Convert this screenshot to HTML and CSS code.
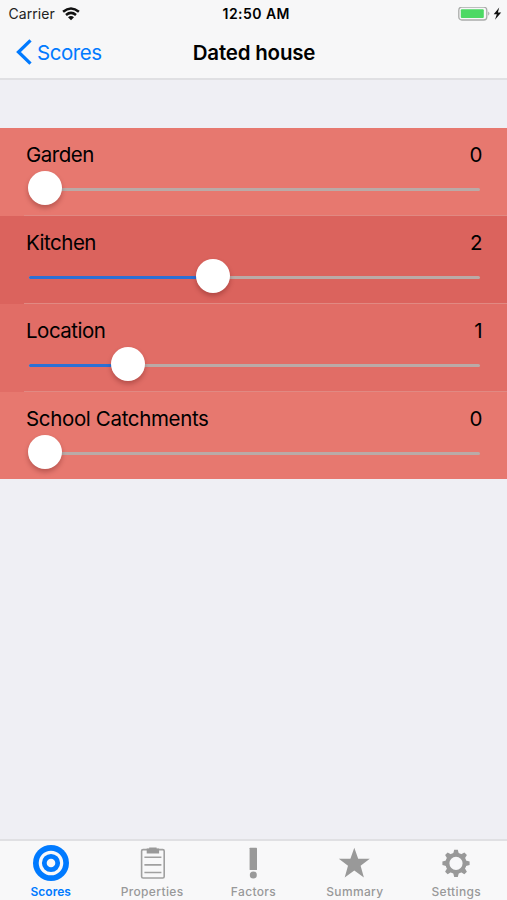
FILE: index.html
```html
<!DOCTYPE html>
<html lang="en">
<head>
<meta charset="utf-8">
<title>Dated house</title>
<link rel="stylesheet" href="styles.css">
</head>
<body>
<div class="app">
  <header class="header">
    <div class="status">
      <div class="status-left">
        <span class="carrier">Carrier</span>
        <svg class="wifi" width="18" height="14" viewBox="0 0 18 14"><g fill="none" stroke="#111" stroke-width="2.5"><path d="M1.1 4.8Q9-1.8 16.9 4.8"/><path d="M4 8Q9 3.8 14 8"/></g><path d="M6 10.2Q9 7.9 12 10.2L9 13.3Z" fill="#111"/></svg>
      </div>
      <span class="time">12:50 AM</span>
      <div class="status-right">
        <svg width="44" height="14" viewBox="0 0 44 14"><rect x=".8" y=".2" width="28" height="12.8" rx="3" fill="none" stroke="#aaacaa" stroke-width="1.3"/><rect x="2.8" y="2.2" width="23" height="8.8" rx="1" fill="#4cd964"/><path d="M30.3 4.6Q32.5 6.6 30.3 8.8Z" fill="#999"/><path d="M41.2.6 35.7 7.2H38.8L37 12.8 43.2 5.6H39.9Z" fill="#111"/></svg>
      </div>
    </div>
    <nav class="nav">
      <a class="back"><svg width="16" height="26" viewBox="0 0 16 26"><path d="M14.5 1.4 2.5 13 14.5 24.6" fill="none" stroke="#007aff" stroke-width="3.3"/></svg><span>Scores</span></a>
      <h1 class="title">Dated house</h1>
    </nav>
  </header>
  <main class="list">
    <section class="row low">
      <div class="line"><span>Garden</span><span>0</span></div>
      <div class="slider" style="--pos: 0px"><i class="fill"></i><i class="thumb"></i></div>
    </section>
    <section class="row high">
      <div class="line"><span>Kitchen</span><span>2</span></div>
      <div class="slider" style="--pos: 167.5px"><i class="fill"></i><i class="thumb"></i></div>
    </section>
    <section class="row mid">
      <div class="line"><span>Location</span><span>1</span></div>
      <div class="slider" style="--pos: 83.2px"><i class="fill"></i><i class="thumb"></i></div>
    </section>
    <section class="row low">
      <div class="line"><span class="long">School Catchments</span><span>0</span></div>
      <div class="slider" style="--pos: 0px"><i class="fill"></i><i class="thumb"></i></div>
    </section>
  </main>
  <footer class="tabs">
    <a class="tab active"><svg width="36" height="36" viewBox="0 0 36 36"><circle cx="18" cy="18" r="18" fill="#007aff"/><circle cx="18" cy="18" r="10.7" fill="none" stroke="#f8f8f9" stroke-width="3.2"/><circle cx="18" cy="18" r="4.3" fill="#f8f8f9"/></svg><span>Scores</span></a>
    <a class="tab"><svg width="36" height="36" viewBox="0 0 36 36"><rect x="7.6" y="4.6" width="22.6" height="28.4" rx="1.5" fill="none" stroke="#a0a0a0" stroke-width="1.6"/><path d="M12.7 3.6h2.5V2.6h7.4v1h2.5v4.8H12.7Z" fill="#999"/><path d="M10.4 12.2h17M10.4 19.9h17M10.4 27.5h17" stroke="#a0a0a0" stroke-width="1.6"/></svg><span>Properties</span></a>
    <a class="tab"><svg width="36" height="36" viewBox="0 0 36 36"><rect x="14.6" y="2.7" width="7.4" height="22.3" rx=".6" fill="#999"/><circle cx="18.3" cy="30" r="3.5" fill="#999"/></svg><span>Factors</span></a>
    <a class="tab"><svg width="36" height="36" viewBox="0 0 36 36"><path d="M17.3 2.8 21.2 13.8H32.8L23.6 20.7 26.9 32.5 17.3 25.6 7.7 32.5 11 20.7 1.8 13.8H13.4Z" fill="#999"/></svg><span>Summary</span></a>
    <a class="tab"><svg width="36" height="36" viewBox="0 0 36 36"><circle cx="18" cy="18.3" r="8.6" fill="none" stroke="#999" stroke-width="4"/><g fill="#999" transform="translate(0 .3)"><path id="tooth" d="M15 9 16.2 4.4h3.6L21 9Z"/><use href="#tooth" transform="rotate(45 18 18)"/><use href="#tooth" transform="rotate(90 18 18)"/><use href="#tooth" transform="rotate(135 18 18)"/><use href="#tooth" transform="rotate(180 18 18)"/><use href="#tooth" transform="rotate(225 18 18)"/><use href="#tooth" transform="rotate(270 18 18)"/><use href="#tooth" transform="rotate(315 18 18)"/></g></svg><span>Settings</span></a>
  </footer>
</div>
</body>
</html>
```
FILE: styles.css
```css
* { box-sizing: border-box; }
body { margin: 0; font-family: Inter, "Liberation Sans", sans-serif; color: #000; background: #efeff4; }
svg { display: block; flex: none; }
.app { width: 507px; height: 900px; display: flex; flex-direction: column; }
.header { height: 80px; background: #f7f7f8; border-bottom: 2px solid #e0e0e3; }
.status { height: 26px; padding: 1px 5px 0 8.5px; display: grid; grid-template-columns: 1fr auto 1fr; align-items: center; font-size: 14px; }
.status-left { display: flex; align-items: center; gap: 7px; }
.carrier { color: #222; letter-spacing: .05px; }
.time { font-weight: 600; letter-spacing: .45px; margin-left: 2px; }
.status-right { justify-self: end; }
.nav { height: 52px; padding: 0 16px; display: grid; grid-template-columns: 1fr auto 1fr; align-items: center; }
.back { display: flex; align-items: center; gap: 5px; color: #007aff; font-size: 20.5px; letter-spacing: -.45px; }
.title { margin: 0 0 0 1px; font-size: 20.5px; font-weight: 600; letter-spacing: -.2px; }
.list { margin-top: 48px; flex: 1; }
.row { height: 88px; padding: 13px 25px 0 26px; }
.row:not(:last-child) { border-bottom: 1px solid transparent; border-image: linear-gradient(to right, transparent 25px, #e18982 25px) 1; }
.row:last-child { height: 87px; }
.low { background: #e7786f; }
.mid { background: #e16d66; }
.high { background: #db635d; }
.line { height: 27px; display: flex; align-items: center; justify-content: space-between; font-size: 20.5px; letter-spacing: -.5px; }
.long { letter-spacing: -.35px; }
.slider { position: relative; height: 3px; margin: 20px 2px 0 3px; border-radius: 2px; background: #baaaa7; }
.fill { display: block; width: var(--pos); height: 3px; border-radius: 2px; background: #2c70d5; }
.thumb { position: absolute; left: var(--pos); top: -17px; width: 34px; height: 34px; margin-left: -1px; border-radius: 50%; background: #fff; box-shadow: 0 3px 5px rgba(70, 0, 0, .28); }
.tabs { height: 61px; padding-top: 4px; border-top: 2px solid #e0e0e3; background: #f8f8f9; display: grid; grid-template-columns: repeat(5, 1fr); }
.tab { display: flex; flex-direction: column; align-items: center; color: #999; font-size: 12px; font-weight: 500; line-height: 15px; letter-spacing: .35px; }
.tab span { margin-top: -1px; padding-top: 4px; }
.active { color: #007aff; font-weight: 600; letter-spacing: 0; }
```
